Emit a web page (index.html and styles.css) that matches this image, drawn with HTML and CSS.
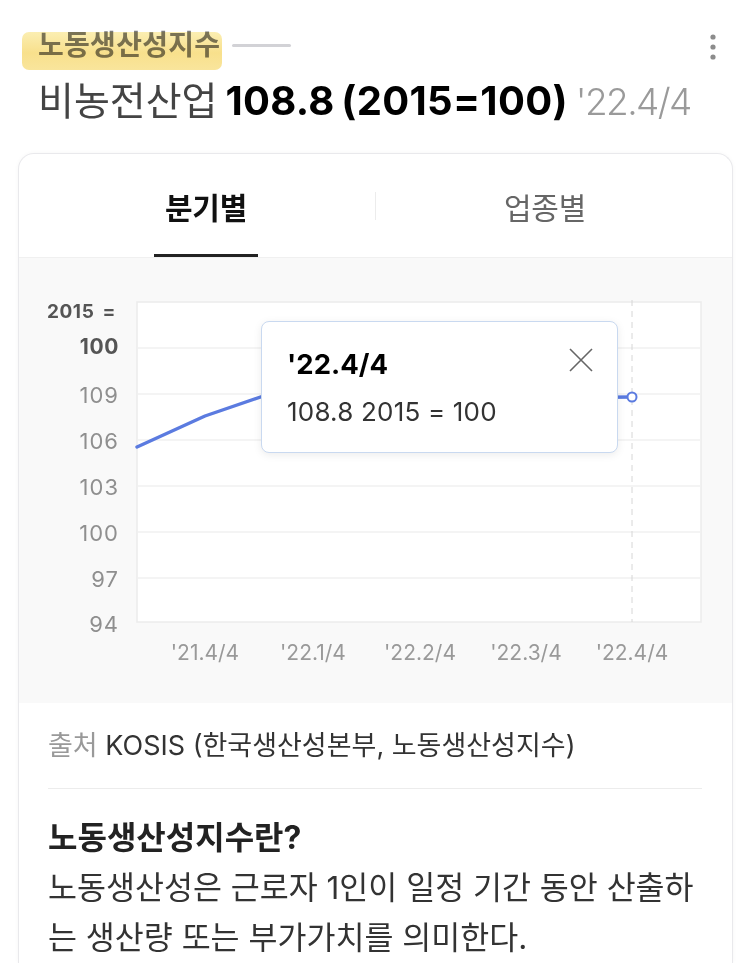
FILE: index.html
```html
<!DOCTYPE html>
<html lang="ko">
<head>
<meta charset="utf-8">
<title>노동생산성지수</title>
<link rel="stylesheet" href="styles.css">
</head>
<body>
<header class="head">
  <div class="title-row">
    <span class="title">노동생산성지수</span>
    <span class="dash"></span>
    <button class="more" aria-label="더보기">
      <svg width="10" height="30" viewBox="0 0 10 30"><circle cx="5" cy="5" r="2.6" fill="#8c8c8c"/><circle cx="5" cy="15" r="2.6" fill="#8c8c8c"/><circle cx="5" cy="25" r="2.6" fill="#8c8c8c"/></svg>
    </button>
  </div>
  <div class="value-row"><span class="sector">비농전산업</span> <b class="value">108.8 (2015=100)</b> <span class="date">'22.4/4</span></div>
</header>

<section class="card">
  <nav class="tabs">
    <div class="tab"><span class="tab-label active">분기별</span></div>
    <span class="tab-sep"></span>
    <div class="tab"><span class="tab-label">업종별</span></div>
  </nav>

  <div class="chart">
    <svg class="plot" width="713" height="445" viewBox="0 0 713 445">
      <rect x="118" y="44" width="564" height="320" fill="#fff" stroke="#ececec" stroke-width="1.5"/>
      <g stroke="#f0f0f0" stroke-width="1.5">
        <line x1="118" y1="90" x2="682" y2="90"/>
        <line x1="118" y1="136" x2="682" y2="136"/>
        <line x1="118" y1="182" x2="682" y2="182"/>
        <line x1="118" y1="228" x2="682" y2="228"/>
        <line x1="118" y1="274" x2="682" y2="274"/>
        <line x1="118" y1="320" x2="682" y2="320"/>
      </g>
      <line x1="613" y1="42" x2="613" y2="364" stroke="#d6d6d6" stroke-width="1" stroke-dasharray="6 5"/>
      <g class="ylab" text-anchor="end">
        <text x="97" y="53" class="unit small">2015 =</text>
        <text x="100" y="88" class="unit">100</text>
        <text x="100" y="137">109</text>
        <text x="100" y="183">106</text>
        <text x="100" y="229">103</text>
        <text x="100" y="275">100</text>
        <text x="100" y="321">97</text>
        <text x="100" y="366">94</text>
      </g>
      <g class="xlab" text-anchor="middle">
        <text x="186" y="394">'21.4/4</text>
        <text x="294" y="394">'22.1/4</text>
        <text x="401" y="394">'22.2/4</text>
        <text x="507" y="394">'22.3/4</text>
        <text x="613" y="394">'22.4/4</text>
      </g>
      <polyline points="118,189 186,158 294,121 401,132 507,140 613,139" fill="none" stroke="#5b7be0" stroke-width="3.4" stroke-linejoin="round" stroke-linecap="round"/>
      <circle cx="613" cy="139" r="4.5" fill="#fff" stroke="#5b7be0" stroke-width="2"/>
    </svg>

    <div class="tooltip">
      <div class="tip-head">
        <strong class="tip-title">'22.4/4</strong>
        <svg class="tip-close" width="24" height="24" viewBox="0 0 24 24"><path d="M1 1 L23 23 M23 1 L1 23" stroke="#666" stroke-width="1.6" fill="none"/></svg>
      </div>
      <div class="tip-body">108.8 2015 = 100</div>
    </div>
  </div>

  <div class="info">
    <p class="source"><span class="src-label">출처</span> KOSIS (한국생산성본부, 노동생산성지수)</p>
    <h2 class="info-title">노동생산성지수란?</h2>
    <p class="info-text">노동생산성은 근로자 1인이 일정 기간 동안 산출하는 생산량 또는 부가가치를 의미한다.</p>
  </div>
</section>
</body>
</html>
```

FILE: styles.css
```css
* { box-sizing: border-box; }
html, body { margin: 0; padding: 0; background: #fff; }
body {
  font-family: "Inter", "Noto Sans CJK KR", sans-serif;
  color: #333;
  width: 750px;
  overflow: hidden;
}

.head { padding: 26px 0 0 38px; }

.title-row {
  display: flex;
  align-items: center;
  height: 38px;
  padding-right: 32px;
}
.title {
  position: relative;
  font-size: 28px;
  line-height: 38px;
  font-weight: 600;
  color: #7c7c7c;
  letter-spacing: 0.3px;
}
.title::after {
  content: "";
  position: absolute;
  left: -16px;
  right: -2px;
  top: 6px;
  bottom: -6px;
  border-radius: 7px;
  background: linear-gradient(180deg, #fbeeb2 0%, #f8e08c 55%, #f9e59c 100%);
  mix-blend-mode: multiply;
}
.dash {
  width: 59px;
  height: 3px;
  margin-left: 12px;
  background: #d2d2d6;
  border-radius: 2px;
}
.more {
  margin-left: auto;
  border: 0;
  background: none;
  padding: 0;
  width: 10px;
  height: 30px;
  display: flex;
  margin-top: 4px;
}

.value-row {
  margin-top: 14px;
  font-size: 39px;
  line-height: 46px;
  white-space: nowrap;
  word-spacing: -3px;
}
.sector { color: #444; font-weight: 400; }
.value { color: #000; font-weight: 700; font-size: 40px; letter-spacing: 0.3px; }
.date { color: #9a9a9a; font-weight: 300; font-size: 37px; letter-spacing: -1.6px; }

.card {
  margin: 28px 17px 0 18px;
  border: 1px solid #e9e9ec;
  border-bottom: 0;
  border-radius: 16px 16px 0 0;
  box-shadow: 0 0 4px rgba(0, 0, 0, 0.04);
  overflow: hidden;
  background: #fff;
}

.tabs {
  display: flex;
  align-items: center;
  height: 104px;
  padding: 0 18px;
  border-bottom: 1px solid #f0f0f0;
}
.tab {
  flex: 1;
  height: 100%;
  display: flex;
  justify-content: center;
}
.tab-sep {
  width: 1px;
  height: 28px;
  background: #ececec;
}
.tab-label {
  display: flex;
  align-items: center;
  height: 100%;
  padding: 3px 11px 0;
  font-size: 30px;
  color: #666;
  border-bottom: 3px solid transparent;
  letter-spacing: -0.3px;
}
.tab-label.active {
  color: #111;
  font-weight: 700;
  border-bottom-color: #222;
}

.chart {
  position: relative;
  height: 445px;
  background: #f9f9f9;
}
.plot { display: block; }
.ylab text {
  font-size: 22px;
  fill: #8f8f8f;
  dominant-baseline: central;
  letter-spacing: 1px;
}
.ylab text.unit {
  fill: #555;
  font-weight: 700;
  font-size: 21px;
  letter-spacing: 0.6px;
}
.ylab text.unit.small { font-size: 19px; letter-spacing: 0.6px; word-spacing: 3px; }
.xlab text {
  font-size: 21px;
  fill: #999;
  dominant-baseline: central;
  letter-spacing: 0px;
}

.tooltip {
  position: absolute;
  left: 242px;
  top: 63px;
  width: 357px;
  height: 132px;
  padding: 26px 24px 0 25px;
  background: #fff;
  border: 1px solid #c9d9f0;
  border-radius: 8px;
  box-shadow: 0 2px 8px rgba(0, 0, 0, 0.08);
}
.tip-head {
  display: flex;
  justify-content: space-between;
  align-items: flex-start;
}
.tip-title {
  font-size: 27.5px;
  line-height: 32px;
  font-weight: 700;
  color: #000;
}
.tip-close { display: block; }
.tip-body {
  margin-top: 16px;
  font-size: 26px;
  line-height: 32px;
  color: #333;
  letter-spacing: 0.2px;
}

.info { padding: 25px 30px 0 29px; }
.source {
  margin: 0;
  font-size: 27px;
  line-height: 36px;
  color: #333;
  padding-bottom: 24px;
  border-bottom: 1px solid #ececec;
}
.src-label { color: #999; }
.info-title {
  margin: 24px 0 0;
  font-size: 32px;
  line-height: 50px;
  font-weight: 700;
  color: #222;
}
.info-text {
  margin: 0;
  font-size: 31.5px;
  line-height: 50px;
  color: #333;
}
```
